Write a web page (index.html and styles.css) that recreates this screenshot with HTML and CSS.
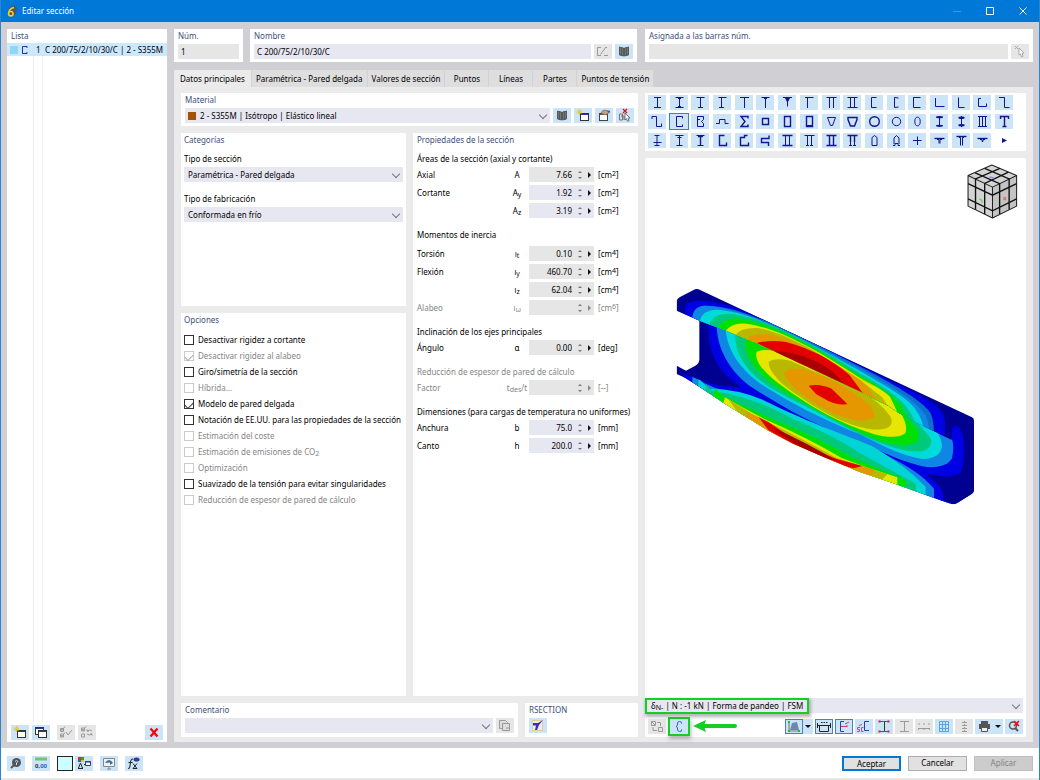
FILE: index.html
```html
<!DOCTYPE html>
<html lang="es">
<head>
<meta charset="utf-8">
<title>Editar sección</title>
<link rel="stylesheet" href="styles.css">
</head>
<body>
<svg class="defs" aria-hidden="true">
  <defs>
    <g id="i-book"><path d="M4.500 3l4 1v8l-4-1zM13.500 3l-4 1v8l4-1z" fill="#777" stroke="#444" stroke-width=".8"/><path d="M6.500 4v7M11.500 4v7" stroke="#555"/></g>
    <g id="i-new"><rect x="6.500" y="5.500" width="8" height="7" fill="#fff" stroke="#333"/><path d="M7 6.500h7" stroke="#2a3a8c"/><path d="M5.500 1v6M2.500 4h6M3.500 2l4 4M7.500 2l-4 4" stroke="#e8cc00" stroke-width=".9"/></g>
    <g id="i-copy"><rect x="3.500" y="2.500" width="8" height="7" fill="#fff" stroke="#333"/><path d="M4 3.500h7" stroke="#2a3a8c"/><rect x="6.500" y="5.500" width="8" height="7" fill="#fff" stroke="#333"/><path d="M7 6.500h7" stroke="#2a3a8c"/></g>
  </defs>
</svg>
<div class="window">
  <header class="titlebar">
    <svg class="logo" viewBox="0 0 12 14"><path d="M3 4l4-3 4 3-1 6-3 1z" fill="#49586b"/><path d="M8 3.500Q3 4.500 2.600 9.500" fill="none" stroke="#ffc91d" stroke-width="1.600"/><circle cx="4.800" cy="9.700" r="2.200" fill="#49586b" stroke="#ffc91d" stroke-width="1.600"/></svg>
    <h1>Editar sección</h1>
    <div class="wincontrols">
      <button class="winbtn dim" aria-label="Minimizar"><svg viewBox="0 0 10 10"><path d="M1 5.500h8"/></svg></button>
      <button class="winbtn" aria-label="Maximizar"><svg viewBox="0 0 10 10"><path d="M1.500 1.500h7v7h-7z"/></svg></button>
      <button class="winbtn" aria-label="Cerrar"><svg viewBox="0 0 10 10"><path d="M1.500 1.500l7 7M8.500 1.500l-7 7"/></svg></button>
    </div>
  </header>

  <div class="workspace">
    <aside class="card list">
      <h2>Lista</h2>
      <div class="rows">
        <button class="listrow"><span class="swatch"></span><svg viewBox="0 0 8 10"><path d="M6 3V1.500H1.500v7H6V7" fill="none" stroke="#2233aa"/></svg><span class="num">1</span><span>C 200/75/2/10/30/C | 2 - S355M</span></button>
      </div>
      <div class="tools">
        <button class="ib" aria-label="Nuevo"><svg viewBox="0 0 18 15"><use href="#i-new"/></svg></button>
        <button class="ib" aria-label="Copiar"><svg viewBox="0 0 18 15"><use href="#i-copy"/></svg></button>
        <button class="ib off space" disabled aria-label="Seleccionar todo"><svg viewBox="0 0 18 15" fill="none" stroke="#999"><path d="M3.500 3.500h3v3h-3zM3.500 9h3v3h-3zM4 4l1 1.500L8 1.500M4 10l1 1.500 3-4M9 7l2 3 4-5"/></svg></button>
        <button class="ib off" disabled aria-label="Invertir selección"><svg viewBox="0 0 18 15" fill="none" stroke="#999"><path d="M3.500 3h3v3h-3zM4 4l1 1.500L8 1.500M3.500 9h3v3h-3zM9 6q3-2 5 0M14 9q-3 2-5 0M9 4.500V6h2M14 10.500V9h-2"/></svg></button>
        <button class="ib last" aria-label="Eliminar"><svg viewBox="0 0 18 15"><path d="M5.500 3.500l7 8M12.500 3.500l-7 8" stroke="#f00" stroke-width="2.200"/></svg></button>
      </div>
    </aside>

    <main class="main">
      <div class="heads">
        <div class="left-heads">
          <section class="card head num-card"><label for="num">Núm.</label><input id="num" class="field grey" value="1" readonly></section>
          <section class="card head grow"><label for="nombre">Nombre</label>
            <div class="line"><input id="nombre" class="field grow" value="C 200/75/2/10/30/C">
              <button class="ib off" disabled aria-label="Editar nombre"><svg viewBox="0 0 18 15" fill="none" stroke="#999"><path d="M7 3.500H3.500v8H7M6.500 10.500l5-7M10 11.500h4M11 3.500h2"/></svg></button>
              <button class="ib" aria-label="Biblioteca"><svg viewBox="0 0 18 15"><use href="#i-book"/></svg></button></div></section>
        </div>
        <section class="card head"><label for="barras">Asignada a las barras núm.</label>
          <div class="line"><input id="barras" class="field grey grow" readonly>
            <button class="ib off" disabled aria-label="Seleccionar barras"><svg viewBox="0 0 18 15"><path d="M8 4l5 5-2 .3 1 3-1.500.5-1-3L8 11z" fill="#fff" stroke="#aaa"/><path d="M4 2l3 3M7 2L4 5" stroke="#aaa"/></svg></button></div></section>
      </div>

      <nav class="tabs" role="tablist">
        <button role="tab" class="tab active" aria-selected="true">Datos principales</button><button role="tab" class="tab">Paramétrica - Pared delgada</button><button role="tab" class="tab">Valores de sección</button><button role="tab" class="tab">Puntos</button><button role="tab" class="tab">Líneas</button><button role="tab" class="tab">Partes</button><button role="tab" class="tab">Puntos de tensión</button>
      </nav>

      <div class="panel">
        <div class="forms">
          <section class="card head"><label for="material">Material</label>
            <div class="line"><div class="pick grow mat"><span class="chip"></span><select id="material"><option>2 - S355M | Isótropo | Elástico lineal</option></select></div>
              <button class="ib" aria-label="Biblioteca de materiales"><svg viewBox="0 0 18 15"><use href="#i-book"/></svg></button>
              <button class="ib" aria-label="Nuevo material"><svg viewBox="0 0 18 15"><use href="#i-new"/></svg></button>
              <button class="ib" aria-label="Editar material"><svg viewBox="0 0 18 15"><rect x="4.500" y="5.500" width="8" height="7" fill="#fff" stroke="#444"/><path d="M5 6.500h7" stroke="#555"/><path d="M6 5q1-3 4-3l3 1 1 2-4 2z" fill="#c69a7c" stroke="#765" stroke-width=".6"/><path d="M12 2l3 1v2l-2-1z" fill="#2c5fb3"/></svg></button>
              <button class="ib" aria-label="Eliminar materiales"><svg viewBox="0 0 18 15"><path d="M3.500 6h3v6h-3zM5 8h3v4" fill="#ddd" stroke="#777"/><path d="M9 5l5 5-2 .2 1 2.500-1.500.5-1-2.500L9 12z" fill="#fff" stroke="#555" stroke-width=".8"/><path d="M7 1l4 4M11 1L7 5" stroke="#e01010" stroke-width="1.300"/></svg></button></div></section>

          <div class="cols">
            <div class="stack">
              <section class="card cats">
                <h2>Categorías</h2>
                <label for="tipo">Tipo de sección</label>
                <div class="pick"><select id="tipo"><option>Paramétrica - Pared delgada</option></select></div>
                <label for="fab">Tipo de fabricación</label>
                <div class="pick"><select id="fab"><option>Conformada en frío</option></select></div>
              </section>
              <section class="card opts">
                <h2>Opciones</h2>
                <label><input type="checkbox">Desactivar rigidez a cortante</label>
                <label class="dis"><input type="checkbox" checked disabled>Desactivar rigidez al alabeo</label>
                <label><input type="checkbox">Giro/simetría de la sección</label>
                <label class="dis"><input type="checkbox" disabled>Híbrida...</label>
                <label><input type="checkbox" checked>Modelo de pared delgada</label>
                <label><input type="checkbox">Notación de EE.UU. para las propiedades de la sección</label>
                <label class="dis"><input type="checkbox" disabled>Estimación del coste</label>
                <label class="dis"><input type="checkbox" disabled><span>Estimación de emisiones de CO<sub>2</sub></span></label>
                <label class="dis"><input type="checkbox" disabled>Optimización</label>
                <label><input type="checkbox">Suavizado de la tensión para evitar singularidades</label>
                <label class="dis"><input type="checkbox" disabled>Reducción de espesor de pared de cálculo</label>
              </section>
            </div>
            <section class="card props">
              <h2>Propiedades de la sección</h2>
              <h3>Áreas de la sección (axial y cortante)</h3>
              <div class="prop"><label for="p1">Axial</label><span class="sym">A</span><span class="spin ro"><input id="p1" value="7.66" readonly><i></i><b></b></span><span>[cm<sup>2</sup>]</span></div>
              <div class="prop"><label for="p2">Cortante</label><span class="sym">A<sub>y</sub></span><span class="spin"><input id="p2" value="1.92"><i></i><b></b></span><span>[cm<sup>2</sup>]</span></div>
              <div class="prop"><span></span><label class="sym" for="p3">A<sub>z</sub></label><span class="spin"><input id="p3" value="3.19"><i></i><b></b></span><span>[cm<sup>2</sup>]</span></div>
              <h3 class="roomy">Momentos de inercia</h3>
              <div class="prop"><label for="p4">Torsión</label><span class="sym plain">I<sub>t</sub></span><span class="spin ro"><input id="p4" value="0.10" readonly><i></i><b></b></span><span>[cm<sup>4</sup>]</span></div>
              <div class="prop"><label for="p5">Flexión</label><span class="sym plain">I<sub>y</sub></span><span class="spin ro"><input id="p5" value="460.70" readonly><i></i><b></b></span><span>[cm<sup>4</sup>]</span></div>
              <div class="prop"><span></span><label class="sym plain" for="p6">I<sub>z</sub></label><span class="spin ro"><input id="p6" value="62.04" readonly><i></i><b></b></span><span>[cm<sup>4</sup>]</span></div>
              <div class="prop dis"><label for="p7">Alabeo</label><span class="sym plain">I<sub>ω</sub></span><span class="spin ro"><input id="p7" disabled><i></i><b></b></span><span>[cm<sup>6</sup>]</span></div>
              <h3>Inclinación de los ejes principales</h3>
              <div class="prop"><label for="p8">Ángulo</label><span class="sym">α</span><span class="spin ro"><input id="p8" value="0.00" readonly><i></i><b></b></span><span>[deg]</span></div>
              <h3 class="dis">Reducción de espesor de pared de cálculo</h3>
              <div class="prop dis"><label for="p9">Factor</label><span class="sym">t<sub>des</sub>/t</span><span class="spin ro"><input id="p9" disabled><i></i><b></b></span><span>[--]</span></div>
              <h3>Dimensiones (para cargas de temperatura no uniformes)</h3>
              <div class="prop"><label for="p10">Anchura</label><span class="sym">b</span><span class="spin"><input id="p10" value="75.0"><i></i><b></b></span><span>[mm]</span></div>
              <div class="prop"><label for="p11">Canto</label><span class="sym">h</span><span class="spin"><input id="p11" value="200.0"><i></i><b></b></span><span>[mm]</span></div>
            </section>
          </div>

          <div class="foot">
            <section class="card head grow"><label for="com">Comentario</label>
              <div class="line"><div class="pick grow"><select id="com"><option></option></select></div>
                <button class="ib off" disabled aria-label="Comentarios"><svg viewBox="0 0 18 15" fill="#ddd" stroke="#999"><path d="M3.500 2.500h6l2 2v6h-8z"/><path d="M6.500 5.500h7v7h-7zM10 10h3"/></svg></button></div></section>
            <section class="card head rsec"><h2>RSECTION</h2>
              <button class="ib" aria-label="RSECTION"><svg viewBox="0 0 18 15"><rect x="3.500" y="2.500" width="10" height="10" fill="#eee" stroke="#e8c9a0"/><path d="M4 5h5l5-3-4 5-2 5H6l1-4.500H4z" fill="#3030c8"/></svg></button></section>
          </div>
        </div>

        <div class="viewer">
          <section class="card palette">
            <button class="pic"><svg viewBox="0 0 18 15"><path d="M6 2.500h7M9.500 2.500v10M6 12.500h7"/></svg></button>
            <button class="pic"><svg viewBox="0 0 18 15"><path d="M5.500 2.500h8M9.500 2.500v10M5.500 12.500h8M8 3.500h3M8 11.500h3"/></svg></button>
            <button class="pic"><svg viewBox="0 0 18 15"><path d="M5.500 2.500h8M9.500 2.500v10M7 12.500h5"/></svg></button>
            <button class="pic"><svg viewBox="0 0 18 15"><path d="M5.500 2.500h8M8.500 2.500v10M6 12.500h5"/></svg></button>
            <button class="pic"><svg viewBox="0 0 18 15"><path d="M5 2.500h9M9.500 2.500v10.500"/></svg></button>
            <button class="pic"><svg viewBox="0 0 18 15"><path d="M5.500 2.500h8M8 3.500h3M9.500 2.500v10.500"/></svg></button>
            <button class="pic"><svg viewBox="0 0 18 15"><path d="M5 2.500h9M9.500 2.500v9"/><path class="fill" d="M7 3h5l-2 4h-1z"/></svg></button>
            <button class="pic"><svg viewBox="0 0 18 15"><path d="M5 2.500h8.500M7.500 2.500v10.500"/></svg></button>
            <button class="pic"><svg viewBox="0 0 18 15"><path d="M4.500 2.500h10M7.500 2.500v10.500M11.500 2.500v10.500"/></svg></button>
            <button class="pic"><svg viewBox="0 0 18 15"><path d="M4.500 2.500h10M7.500 2.500v10M11.500 2.500v10M4.500 12.500h10"/></svg></button>
            <button class="pic"><svg viewBox="0 0 18 15"><path d="M11.500 2.500h-5v10h5"/></svg></button>
            <button class="pic"><svg viewBox="0 0 18 15"><path d="M11.500 3l-4-.5v10l4-.5"/></svg></button>
            <button class="pic"><svg viewBox="0 0 18 15"><path d="M12.500 2.500h-7v10h7"/></svg></button>
            <button class="pic"><svg viewBox="0 0 18 15"><path d="M5.500 3v8.500h9"/></svg></button>
            <button class="pic"><svg viewBox="0 0 18 15"><path d="M6.500 2.500v10h6"/></svg></button>
            <button class="pic"><svg viewBox="0 0 18 15"><path d="M8 3.500H5.500v8h8V8.500"/></svg></button>
            <button class="pic"><svg viewBox="0 0 18 15"><path d="M4 2.500h5.500v10h5"/></svg></button>

            <button class="pic"><svg viewBox="0 0 18 15"><path d="M4 5V2.500h4.500v10h5V9.500"/></svg></button>
            <button class="pic on"><svg viewBox="0 0 18 15"><path d="M12.500 4.500v-2h-6v10h6v-2"/></svg></button>
            <button class="pic"><svg viewBox="0 0 18 15"><path d="M9 5.500H6.500v-3h6v3l-2 2 2 2v3h-6v-10"/></svg></button>
            <button class="pic"><svg viewBox="0 0 18 15"><path d="M3 9.500h3.500v-4h5.500v4h3.500"/></svg></button>
            <button class="pic"><svg viewBox="0 0 18 15"><path class="b" d="M13 4.500v-2H6l4 5-4 5h7v-2"/></svg></button>
            <button class="pic"><svg viewBox="0 0 18 15"><path class="b" d="M6.500 4.500h6v6h-6z"/></svg></button>
            <button class="pic"><svg viewBox="0 0 18 15"><path class="b" d="M6.500 2.500h6v10h-6z"/></svg></button>
            <button class="pic"><svg viewBox="0 0 18 15"><path class="b" d="M6.500 2.500h6v10h-6z"/><path d="M6 11.500h7"/></svg></button>
            <button class="pic"><svg viewBox="0 0 18 15"><path d="M5.500 3.500h8l-3 8h-2z"/></svg></button>
            <button class="pic"><svg viewBox="0 0 18 15"><path class="b" d="M5 3.500h9v2l-2.500 6.500h-4L5 5.500z"/></svg></button>
            <button class="pic"><svg viewBox="0 0 18 15"><circle class="b" cx="9.500" cy="7.500" r="4.800"/></svg></button>
            <button class="pic"><svg viewBox="0 0 18 15"><circle cx="9.500" cy="7.500" r="4.200"/></svg></button>
            <button class="pic"><svg viewBox="0 0 18 15"><ellipse cx="9.500" cy="7.500" rx="2.700" ry="4.300"/></svg></button>
            <button class="pic"><svg viewBox="0 0 18 15"><path d="M9.500 3v9"/><ellipse class="fill" cx="9.500" cy="3.200" rx="3.500" ry="1.100"/><ellipse class="fill" cx="9.500" cy="11.800" rx="3.500" ry="1.100"/></svg></button>
            <button class="pic"><svg viewBox="0 0 18 15"><path d="M9.500 2v11"/><ellipse class="fill" cx="9.500" cy="3.800" rx="3.200" ry="1.200"/><ellipse class="fill" cx="9.500" cy="11.200" rx="3.200" ry="1.200"/></svg></button>
            <button class="pic"><svg viewBox="0 0 18 15"><path d="M5 2.500h9M5 12.500h9M6.500 2.500v10M9.500 2.500v10M12.500 2.500v10"/></svg></button>
            <button class="pic"><svg viewBox="0 0 18 15"><path class="b" d="M5.500 5V2.500h8V5M9.500 2.500v10M7.500 12.500h4"/></svg></button>

            <button class="pic"><svg viewBox="0 0 18 15"><path d="M6.500 2.500h5M5.500 9.500h8M9 2.500v10M6.500 12.500h5"/></svg></button>
            <button class="pic"><svg viewBox="0 0 18 15"><path d="M5.500 2.500h8M7.500 4.500h4M9.500 2.500v10M6.500 12.500h6"/></svg></button>
            <button class="pic"><svg viewBox="0 0 18 15"><path d="M5.500 2.500h8M6.500 12.500h6"/><path class="b" d="M9.500 3v9M7 3.500h5"/></svg></button>
            <button class="pic"><svg viewBox="0 0 18 15"><path class="b" d="M11.500 2.500h-5v10h7V9.500"/></svg></button>
            <button class="pic"><svg viewBox="0 0 18 15"><path class="b" d="M12.500 2.500h-3v2h-4v8h8V9.500"/></svg></button>
            <button class="pic"><svg viewBox="0 0 18 15"><path class="b" d="M13 2.500v3H5.500v4h7v3.500"/></svg></button>
            <button class="pic"><svg viewBox="0 0 18 15"><path class="b" d="M4.500 2.500h10M4.500 12.500h10"/><path d="M7.500 2.500v10M11.500 2.500v10"/></svg></button>
            <button class="pic"><svg viewBox="0 0 18 15"><path d="M4.500 2.500h10M7.500 2.500v10M11.500 2.500v10M6 12.500h3M10 12.500h3"/></svg></button>
            <button class="pic"><svg viewBox="0 0 18 15"><path class="b" d="M4.500 2.500h10M4.500 12.500h10M7.500 2.500v10M11.500 2.500v10"/></svg></button>
            <button class="pic"><svg viewBox="0 0 18 15"><path class="b" d="M4.500 2.500h10M7.500 3v6M11.500 3v6"/><path d="M7.500 9v4M11.500 9v4M6 12.500h3M10 12.500h3"/></svg></button>
            <button class="pic"><svg viewBox="0 0 18 15"><path d="M7 12.500v-8l2.500-2 2.500 2v8z"/></svg></button>
            <button class="pic"><svg viewBox="0 0 18 15"><path d="M6 12.500h2v-2h3v2h2M7 11V5l2.500-2.500L12 5v6"/></svg></button>
            <button class="pic"><svg viewBox="0 0 18 15"><path d="M5 7.500h8.500M9.500 3.500v8.500"/></svg></button>
            <button class="pic"><svg viewBox="0 0 18 15"><path class="b" d="M4.500 5.500h10"/><path d="M7 6.500h2v4M12 6.500h-2v4"/></svg></button>
            <button class="pic"><svg viewBox="0 0 18 15"><path class="b" d="M4.500 3.500h10"/><path d="M7 4.500h1.500v8M12 4.500h-1.500v8"/></svg></button>
            <button class="pic"><svg viewBox="0 0 18 15"><path class="b" d="M4.500 5.500h10"/><path d="M7 6.500h2v2h1v-2h2"/></svg></button>
            <button class="pic more" aria-label="Más"><svg viewBox="0 0 18 15"><path class="fill" d="M7 5l5 2.500-5 2.500z"/></svg></button>
          </section>

          <section class="card stage">
            <div class="view">
              <svg class="scene" viewBox="-45 -336 1143 1620" role="img" aria-label="Forma de pandeo del perfil">
                <defs>
                  <clipPath id="sil"><path d="M50 92Q51 86 60 81L105 58Q112 55 122 61L936 442Q942 445 942 452V660Q942 667 936 671L888 701Q882 705 872 701L820 683L700 640L600 606L500 565L400 521L325 482L260 442L200 405L120 352L75 323L50 312V287L78 302L106 287Q118 281 118 268V152L50 122Z"/></clipPath>
                  <clipPath id="web"><path d="M118 150L195 181L290 219L608 368L682 405L712 426L770 458L875 510V478L900 455H942V720H40V280H118Z"/></clipPath>
                  <clipPath id="lip"><path d="M50 50H942V450L900 460L872 482V508L770 458L712 426L682 405L608 368L290 219L195 181L118 152L50 122Z"/></clipPath>
                </defs>
                <g clip-path="url(#sil)">
                  <path fill="#000091" d="M0 0H1000V750H0Z"/>
                  <g clip-path="url(#web)">
                    <path fill="#0000e4" d="M145 140C140 240 165 300 245 352C200 352 130 335 96 315L70 310V335L900 720L852 690Q855 660 820 630L800 612Q900 635 908 590Q920 500 896 470L860 460L400 140Z"/>
                    <path fill="#0f86e4" d="M171 150C165 220 200 300 280 355C350 400 420 440 497 474C430 460 340 400 245 372Q160 362 97 318V340L822 690V656C760 580 620 530 552 501C650 535 730 580 800 591Q860 595 876 565Q885 520 872 500L400 150Z"/>
                    <path fill="#00dada" d="M197 150C190 230 240 310 340 365C430 420 520 460 600 493C680 535 740 562 790 567Q840 565 846 530Q845 505 830 485L400 150Z"/>
                    <path fill="#00c97b" d="M227 170C215 260 270 325 380 380C480 430 560 475 640 510C710 540 760 550 792 542Q820 530 812 505L770 455L400 150Z"/>
                    <path fill="#00e000" d="M262 180C235 260 300 325 400 382C500 435 580 485 660 512C720 530 768 530 777 505Q780 480 740 440L400 150Z"/>
                    <path fill="#e7e600" d="M290 245Q315 235 345 244L720 425Q745 465 736 490Q710 510 640 492C540 460 470 420 400 372C330 325 280 280 290 245Z"/>
                    <path fill="#b9b800" d="M326 275Q345 262 390 272L605 366Q660 395 692 440Q702 465 680 475C610 495 490 430 420 380C365 345 325 305 326 275Z"/>
                    <path fill="#e59700" d="M372 308Q385 292 430 298Q530 325 630 405Q650 435 640 445Q590 465 500 420Q380 350 372 308Z"/>
                    <path fill="#e40000" d="M446 347Q480 340 515 356L562 402Q540 408 505 393L468 372Z"/>
                    <path fill="#00d4d4" d="M115 325L147 356Q250 357 330 400C450 460 570 500 640 530Q740 590 797 650V676L600 610L300 470L115 355Z"/>
                    <path fill="#00c97b" d="M139 345L155 362Q280 380 400 448Q520 495 600 550Q710 610 768 642V668L600 610L300 470L135 365Z"/>
                    <path fill="#00e000" d="M165 355L185 375Q260 412 350 452Q480 505 575 562L737 630V655L600 610L300 470L160 382Z"/>
                    <path fill="#e7e600" d="M195 382Q240 410 320 450Q440 502 545 564L625 594L712 622V645L600 615L300 480L190 400Z"/>
                    <path fill="#b9b800" d="M205 388L290 440Q420 502 530 564L682 613L665 630L400 530L235 430Z"/>
                    <path fill="#e59700" d="M260 425L300 443Q420 520 520 562L645 600L630 620L400 530L260 445Z"/>
                    <path fill="#e00000" d="M296 442L325 456Q420 526 530 567L607 588L580 595Q460 565 325 480Z"/>
                    <path fill="#a80000" d="M340 473Q440 518 530 572Q450 555 355 488Z"/>
                    <path fill="#000091" d="M80 303Q125 305 148 325L245 352Q165 350 120 330L78 313ZM800 613L942 630V710L850 690Q855 665 830 640Z"/>
                  </g>
                  <g clip-path="url(#lip)">
                    <path fill="#0000e4" d="M75 140V110Q78 93 120 93C210 90 330 155 600 286C720 350 820 385 847 428Q860 450 853 510L600 380Z"/>
                    <path fill="#0a70c8" d="M97 145Q100 108 135 107C240 105 380 180 600 290C700 340 780 390 805 420Q823 440 822 500L600 380Z"/>
                    <path fill="#0f86e4" d="M97 145Q100 108 135 107C240 112 380 180 600 296C690 345 760 390 785 420Q808 445 810 500L600 380Z"/>
                    <path fill="#00dada" d="M119 155Q125 122 165 119C260 120 400 190 600 303C690 355 750 390 768 420Q790 450 792 490L600 380Z"/>
                    <path fill="#00c97b" d="M146 165Q160 131 205 131C300 137 430 205 600 310C680 355 730 390 745 420Q765 445 768 475L600 390Z"/>
                    <path fill="#00e000" d="M171 176Q188 145 230 145C320 155 450 220 600 318C660 350 710 385 725 410L745 450L600 390Z"/>
                    <path fill="#e7e600" d="M195 185Q215 156 260 161C350 174 460 232 600 324Q670 360 690 380L713 428L600 390Z"/>
                    <path fill="#b9b800" d="M226 196Q240 172 295 174C390 195 480 250 590 325Q630 335 650 356L682 406L600 390Z"/>
                    <path fill="#e7e600" d="M595 326Q650 348 680 378L690 400Z"/>
                    <path fill="#e59700" d="M259 208Q275 188 325 193C400 210 490 258 570 310Q630 345 643 388L600 380Z"/>
                    <path fill="#e40000" d="M290 219Q335 208 378 216C460 237 530 280 570 317L609 370L500 340Z"/>
                    <path fill="#a80000" d="M343 244Q400 245 450 267Q520 295 550 340Z"/>
                  </g>
                </g>
              </svg>
              <svg class="cube" viewBox="0 0 150 162"><path fill="#d4d4d4" d="M73 2L147 33V125L75 160L2 125V33Z"/><path fill="#c4c4c4" d="M75 68L147 33V125L75 160Z"/><path fill="none" stroke="#222" stroke-width="3" stroke-linejoin="round" d="M73 3L146 34L75 68L3 34ZM3 34V124L75 159V68M146 34V124L75 159"/><path fill="none" stroke="#111" stroke-width="4" d="M24 26L96 58V147M52 13L124 44V134M97 13L25 44V134M122 24L52 57V147M3 58L75 92L146 58M3 103L75 138L146 103"/><path d="M36 103l8 4v8" fill="none" stroke="#6bd06b" stroke-width="4"/><path d="M107 98l8 8M115 98l-8 8" stroke="#e07070" stroke-width="4"/><path d="M66 38l14 4" stroke="#8888d8" stroke-width="4"/></svg>
            </div>
            <button class="combo" role="combobox" aria-haspopup="listbox" aria-expanded="false" aria-label="Forma de pandeo"><span class="mark">δ<sub>N-</sub> | N : -1 kN | Forma de pandeo | FSM</span></button>
            <div class="tools view-tools">
              <button class="ib off" disabled aria-label="Intercambiar"><svg viewBox="0 0 18 15" fill="none" stroke="#999"><path d="M3.500 2.500h4v4h-4zM10.500 8.500h4v4h-4zM9 3.500h3.500V7M5 8v3.500h4M4 3l3 3"/></svg></button>
              <button class="ib marked" aria-label="Forma de pandeo"><svg viewBox="0 0 18 15" fill="none" stroke="#3c62c8"><path d="M11.500 4.500Q12 2.500 9.500 2.500T7.500 5Q8 7 6 7.500Q8 8 7.500 10T9.500 12.500T11.500 10.500"/></svg></button>
              <svg class="arrow" viewBox="0 0 46 16"><path d="M11 8h32" stroke="#14ce23" stroke-width="4" stroke-linecap="round"/><path d="M1 8l13-6-2 6 2 6z" fill="#14ce23"/></svg>
              <span class="split"><button class="ib framed" aria-label="Vista"><svg viewBox="0 0 18 15"><path d="M5 11L7 4l5-1 2 8z" fill="#6d87b5"/><path d="M4 3v9h11" fill="none" stroke="#777"/><path d="M3 2h2v2H3zM3 11h2v2H3zM13 11h2v2h-2z" fill="#20c020"/></svg></button><button class="drop" aria-label="Opciones de vista"></button></span>
              <button class="ib framed" aria-label="Cotas"><svg viewBox="0 0 18 15" fill="none" stroke="#222"><path d="M4.500 6.500h9v6h-9zM2.500 4v5M15.500 4v5M2.500 6.500h13M6 3.500h1.500M8.500 3.500H10M11 3.500h1.500"/></svg></button>
              <button class="ib framed" aria-label="Ejes"><svg viewBox="0 0 18 15" fill="none" stroke="#2c3fae"><path d="M9 2.500H5.500v10H9"/><path d="M6 7.500h6M10 5l4-2M12 6v2" stroke="#d33a73"/></svg></button>
              <button class="ib" aria-label="Centro de cortante"><svg viewBox="0 0 18 15" fill="none" stroke="#2c3fae"><path d="M14 2.500H9.500v9H14"/><path d="M5 8.500H2.500v2h2v2H2M8.500 8.500h-2v4h2M4 6.500l3-1" stroke="#c64694"/></svg></button>
              <button class="ib" aria-label="Puntos de tensión"><svg viewBox="0 0 18 15" fill="none" stroke="#e02020"><path d="M4 2.500h10M4 12.500h10"/><path d="M9.500 3v9" stroke="#334"/><path d="M3.500 1.500h2v2h-2zM12.500 1.500h2v2h-2zM3.500 11.500h2v2h-2zM12.500 11.500h2v2h-2z" fill="#e02020" stroke="none"/></svg></button>
              <button class="ib off" disabled aria-label="Partes"><svg viewBox="0 0 18 15" fill="none" stroke="#999"><path d="M5 2.500h9M5 12.500h9M9.500 3v9"/></svg></button>
              <button class="ib off" disabled aria-label="Numeración"><svg viewBox="0 0 18 15" fill="none" stroke="#999"><path d="M3 9.500h12M3.500 9v2M9 9v2M14.500 9v2M4 4v2M9 4v2M14 4v2"/></svg></button>
              <button class="ib" aria-label="Cuadrícula"><svg viewBox="0 0 18 15" fill="none" stroke="#55a7ea"><path d="M4.500 2.500h9v10h-9zM4.500 5.500h9M4.500 9.500h9M7.500 2.500v10M10.500 2.500v10"/></svg></button>
              <button class="ib off" disabled aria-label="Valores"><svg viewBox="0 0 18 15" fill="none" stroke="#999"><path d="M9.500 2v11" stroke-dasharray="2 1"/><path d="M7 3.500h5M7 6.500h5M7 9.500h5M7 12.500h5"/></svg></button>
              <span class="split"><button class="ib" aria-label="Imprimir"><svg viewBox="0 0 18 15"><path d="M6 2h7v3H6zM4 5h11v5H4z" fill="#555"/><path d="M6.500 8.500h6v4h-6z" fill="#eee" stroke="#555"/></svg></button><button class="drop" aria-label="Opciones de impresión"></button></span>
              <button class="ib" aria-label="Restablecer vista"><svg viewBox="0 0 18 15"><circle cx="8" cy="6.500" r="3.500" fill="none" stroke="#555" stroke-width="1.500"/><path d="M10 9l3 3" stroke="#555" stroke-width="2"/><path d="M9 2l5 5M14 2L9 7" stroke="#e11" stroke-width="1.700"/></svg></button>
            </div>
          </section>
        </div>
      </div>
    </main>
  </div>

  <footer class="footer">
    <button class="ib" aria-label="Ayuda"><svg viewBox="0 0 18 15"><circle cx="9.500" cy="6.500" r="4.500" fill="#555"/><path d="M7 9l-3 3" stroke="#555" stroke-width="2"/><path d="M8 5.500q1.500-2 3 0L9.500 7v2" fill="none" stroke="#cce4f7"/></svg></button>
    <button class="ib" aria-label="Unidades"><svg viewBox="0 0 18 15"><path d="M3 1.500h12v3H3z" fill="#74c276"/><text x="3" y="12" class="tiny">0,<tspan class="blue">00</tspan></text></svg></button>
    <span class="pair"><button class="ib color" aria-label="Color"></button><button class="ib" aria-label="Mostrar"><svg viewBox="0 0 18 15"><path d="M3 1h3v3H3z" fill="#e22"/><path d="M6 1h3v3H6z" fill="#2a2"/><path d="M3 4h3v2H3z" fill="#26c"/><path d="M6 4h3v2H6z" fill="#dc2"/><path d="M3.500 12l2-5 2 5M3 12.500h5M9 8.500h2" fill="none" stroke="#222"/><path d="M10.500 5.500h5v4h-5zM10 6h6" fill="#fff" stroke="#2a3a8c"/></svg></button></span>
    <button class="ib" aria-label="Pantalla"><svg viewBox="0 0 18 15"><path d="M3.500 2.500h11v8h-11zM9 11v2M7 13h4" fill="#e9f2f8" stroke="#888"/><path d="M5 7q4-6 8 0l-3 2V6.500z" fill="#3f6e92"/></svg></button>
    <button class="ib" aria-label="Fórmula"><svg viewBox="0 0 18 15"><path d="M8 3Q6 2 5.500 6L5 10q0 3-2 2.500M3.500 6.500h4M8 7.500l4 5M12 7.500l-4 5M8 12.500h4" fill="none" stroke="#222"/><ellipse cx="11.500" cy="3.500" rx="3" ry="2" fill="#3a3a8c"/></svg></button>
    <div class="actions"><button class="btn primary">Aceptar</button><button class="btn">Cancelar</button><button class="btn" disabled>Aplicar</button></div>
  </footer>
</div>
</body>
</html>
```
FILE: styles.css
```css
* { box-sizing: border-box; }
body, h1, h2, h3 { margin: 0; font-weight: 400; }
body, button, input, select {
  font: 8px/12px "Noto Sans", "Open Sans", sans-serif;
  color: #000;
}
button, input, select { margin: 0; padding: 0; border: 0; border-radius: 0; background: none; }
sub, sup { font-size: 7px; line-height: 0; }
sub { vertical-align: -1px; }
sup { vertical-align: 2px; }
.defs { display: none; }
.grow { flex: 1; min-width: 0; }
.dis, .dis label { color: #858585; }

.window {
  display: flex;
  flex-direction: column;
  min-height: 100vh;
  border: solid #2a86d2;
  border-width: 0 1px;
  background: #fff;
}
.titlebar {
  display: flex;
  align-items: center;
  height: 22px;
  padding-left: 5px;
  gap: 4px;
  background: #0078d7;
}
.logo { width: 12px; height: 14px; }
.titlebar h1 { font-size: 8px; color: #fff; }
.wincontrols { display: flex; margin-left: auto; }
.winbtn { display: grid; place-items: center; width: 33px; height: 22px; }
.winbtn svg { width: 10px; height: 10px; fill: none; stroke: #fff; }
.winbtn.dim svg { stroke: #3d98e2; }

.workspace {
  flex: 1;
  display: flex;
  gap: 7px;
  padding: 7px 6px 6px;
  background: #cfcfd4;
}
.card { background: #fff; }
.card h2, .head label { display: block; font-size: 8px; line-height: 12px; color: #3c5078; }

.list { display: flex; flex-direction: column; flex: 0 0 160px; }
.list h2 { padding: 1px 4px; }
.rows {
  flex: 1;
  background: linear-gradient(90deg, transparent 26px, #eee 26px, #eee 27px, transparent 27px, transparent 35px, #eee 35px, #eee 36px, transparent 36px);
}
.listrow {
  display: flex;
  align-items: center;
  width: 100%;
  height: 13px;
  padding-left: 3px;
  text-align: left;
  white-space: nowrap;
  background: #cce8ff;
}
.swatch { width: 8px; height: 8px; background: #8fd7f5; }
.listrow svg { width: 8px; height: 10px; margin-left: 3px; }
.num { width: 16px; padding-left: 7px; }

.ib {
  display: grid;
  place-items: center;
  flex: none;
  width: 18px;
  height: 15px;
  background: #cce4f7;
}
.ib svg { width: 18px; height: 15px; }
.ib.off { background: #e6e6e6; }
.ib.framed svg { margin: -1px; }
.framed { border: 1px solid #4583b8; }
.tools { display: flex; gap: 3px; padding: 3px 4px 2px; }
.space { margin-left: 4px; }
.last { margin-left: auto; }

.main { flex: 1; min-width: 0; display: flex; flex-direction: column; }
.heads { display: grid; grid-template-columns: 463fr 388fr; gap: 8px; }
.left-heads { display: flex; gap: 7px; }
.num-card { width: 69px; }
.head { padding: 1px 4px 3px; }
.head > .field, .line { width: 100%; margin-top: 2px; }
.line { display: flex; align-items: center; gap: 3px; }
.field { height: 15px; padding: 0 3px; background: #e7e7f2; outline: 0; }
.field.grey { background: #e6e6e6; }

.tabs { display: flex; height: 17px; margin-top: 8px; }
.tab {
  min-width: 44px;
  padding: 0 4px;
  border-right: 1px solid #d2d2d2;
  background: #dedede;
  white-space: nowrap;
}
.tab.active { padding: 0 6px; background: #ebebeb; }

.panel {
  flex: 1;
  display: grid;
  grid-template-columns: 457fr 381fr;
  gap: 7px;
  padding: 6px 7px 5px;
  background: #ebebeb;
}
.forms, .viewer, .stack { display: flex; flex-direction: column; gap: 7px; min-width: 0; }

.pick { position: relative; display: flex; align-items: center; height: 15px; background: #e7e7f2; }
.pick select { appearance: none; flex: 1; min-width: 0; height: 15px; padding: 0 16px 0 4px; outline: 0; }
.pick::after, .combo::after {
  content: "";
  position: absolute;
  right: 4px;
  top: 4px;
  width: 5px;
  height: 5px;
  border: solid #777;
  border-width: 0 1px 1px 0;
  transform: rotate(45deg);
}
.chip { width: 8px; height: 8px; margin-left: 3px; background: #a35200; }

.cols { flex: 1; display: grid; grid-template-columns: 1fr 1fr; gap: 7px; }
.cats { height: 173px; padding: 1px 3px; }
.cats label { display: block; margin: 7px 0 2px; }
.cats .pick + label { margin-top: 11px; }
.opts { flex: 1; padding: 1px 3px; }
.opts h2 { margin-bottom: 6px; }
.opts label { display: flex; align-items: center; gap: 4px; height: 16px; white-space: nowrap; }
.opts input {
  appearance: none;
  display: grid;
  place-items: center;
  width: 10px;
  height: 10px;
  border: 1px solid #333;
}
.opts input:disabled { border-color: #ccc; }
.opts input:checked::after {
  content: "";
  width: 7px;
  height: 4px;
  border: solid #333;
  border-width: 0 0 1px 1px;
  transform: rotate(-45deg);
}
.opts input:disabled:checked::after { border-color: #aaa; }

.props { padding: 1px 4px; }
.props h3 { margin: 10px 0 1px; font-size: 8px; line-height: 14px; white-space: nowrap; }
.props h2 + h3 { margin-top: 6px; }
.props .roomy { margin-bottom: 4px; }
.prop { display: grid; grid-template-columns: 88px 24px 65px auto; align-items: center; height: 15px; white-space: nowrap; }
.prop + .prop { margin-top: 3px; }
.prop > :last-child { padding-left: 4px; }
.sym { text-align: center; }
.plain { font-family: "Open Sans", sans-serif; }
.spin { display: flex; align-items: center; height: 15px; background: #e7e7f2; }
.spin.ro { background: #e6e6e6; }
.spin input { width: 43px; text-align: right; outline: 0; }
.spin i { display: flex; flex-direction: column; gap: 4px; margin: 0 6px 0 6px; }
.spin i::before, .spin i::after { content: ""; border: 2px solid transparent; border-top: 0; border-bottom-color: #777; }
.spin i::after { border-bottom: 0; border-top: 2px solid #777; }
.spin b { border: 3px solid transparent; border-right: 0; border-left-color: #111; }
.dis .spin b { border-left-color: #888; }

.foot { display: grid; grid-template-columns: 337fr 113fr; gap: 7px; }
.foot .head { padding-bottom: 4px; }
.rsec .ib { margin-top: 2px; }

.palette {
  display: grid;
  grid-template-columns: repeat(17, 18px);
  justify-content: space-between;
  gap: 4px 0;
  padding: 2px 13px 3px 3px;
}
.pic { width: 18px; height: 15px; background: #cce4f7; }
.pic svg { display: block; width: 18px; height: 15px; fill: none; stroke: #15158f; }
.pic .fill { fill: #15158f; stroke: none; }
.pic .b { stroke-width: 1.4; }
.pic.on { outline: 1px solid #3a83bd; }
.pic.more { background: none; }

.stage { flex: 1; display: flex; flex-direction: column; border-radius: 2px; }
.view { position: relative; flex: 1; min-height: 240px; }
.scene { position: absolute; inset: 0; width: 100%; height: 100%; }
.cube { position: absolute; top: 6px; right: 8px; width: 51px; height: 55px; }
.combo {
  position: relative;
  display: flex;
  align-items: center;
  height: 15px;
  margin-right: 3px;
  background: #e7e7f2;
}
.mark { padding: 0 4px; border: 2px solid #14ce23; box-shadow: 1px 2px 3px 1px #7778; }
.view-tools { gap: 2px; padding: 5px 3px 3px; align-items: center; }
.marked { margin: 0 2px; outline: 2px solid #14ce23; box-shadow: 1px 3px 4px 2px #7778; }
.arrow { width: 46px; height: 16px; margin-right: auto; }
.split { display: flex; background: #cce4f7; }
.drop { width: 10px; }
.drop::before { content: ""; display: block; margin: 0 auto; width: 0; border: 3px solid transparent; border-bottom: 0; border-top-color: #111; }

.footer {
  display: flex;
  flex: none;
  align-items: center;
  gap: 7px;
  height: 32px;
  padding: 0 6px;
  border-bottom: 2px solid #e8e8e8;
}
.pair { display: flex; gap: 2px; }
.color { width: 16px; border: 1px solid #222; background: #ccffff; }
.tiny { font-size: 6px; font-weight: 700; fill: #333; }
.blue { fill: #2a62d0; }
.actions { display: flex; gap: 7px; margin-left: auto; }
.btn { width: 59px; height: 15px; border: 1px solid #adadad; background: #e1e1e1; }
.btn.primary { border: 2px solid #0078d7; }
.btn:disabled { border-color: #bfbfbf; background: #ccc; color: #838383; }
```
